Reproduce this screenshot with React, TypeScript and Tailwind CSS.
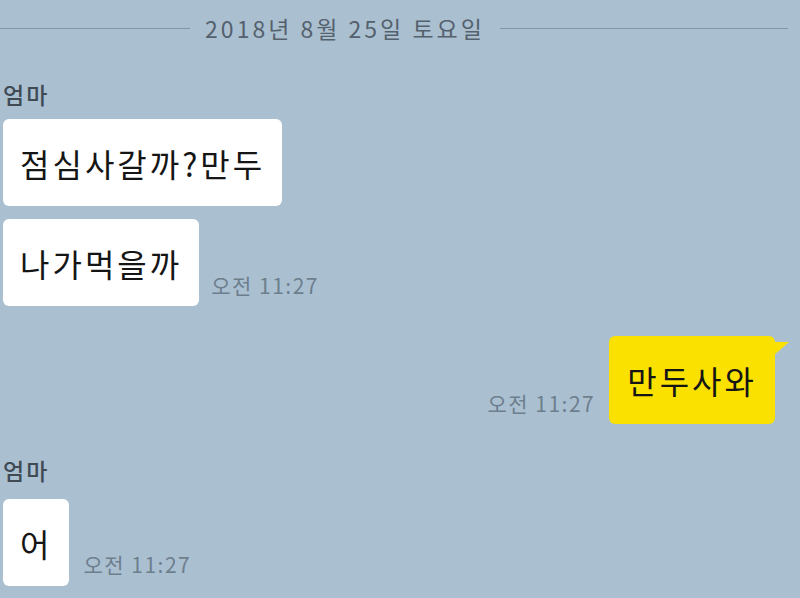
import React from 'react';

const font = { fontFamily: '"Noto Sans CJK KR", "Noto Sans", sans-serif' };

const Time: React.FC = () => (
  <span className="text-[21px] leading-none tracking-[1.5px] text-[#6d7e8d] whitespace-nowrap">오전 11:27</span>
);

const Bubble: React.FC<{ text: string }> = ({ text }) => (
  <div className="bg-white rounded-[6px] h-[87px] px-[17px] flex items-center">
    <span className="text-[32px] leading-none tracking-[3px] text-[#151515] whitespace-nowrap">{text}</span>
  </div>
);

export default function App() {
  return (
    <div className="w-[800px] h-[598px] bg-[#aac0d1] overflow-hidden flex flex-col" style={font}>
      {/* date divider */}
      <div className="h-[56px] flex items-center pr-[12px]">
        <div className="w-[190px] h-px bg-[#8497a7]" />
        <span className="mx-auto text-[23px] leading-none tracking-[3px] text-[#55616d] whitespace-nowrap">2018년 8월 25일 토요일</span>
        <div className="w-[288px] h-px bg-[#8497a7]" />
      </div>

      {/* mom block 1 */}
      <div className="pl-[3px] mt-[27px] text-[23px] leading-none tracking-[2px] font-medium text-[#3f4a55]">엄마</div>
      <div className="pl-[3px] mt-[13px] flex">
        <Bubble text="점심사갈까?만두" />
      </div>
      <div className="pl-[3px] mt-[13px] flex items-end gap-[12px]">
        <Bubble text="나가먹을까" />
        <div className="pb-[7px]">
          <Time />
        </div>
      </div>

      {/* me */}
      <div className="mt-[30px] pr-[25px] flex justify-end items-end gap-[14px]">
        <div className="pb-[7px]">
          <Time />
        </div>
        <div className="relative">
          <div className="bg-[#fae100] rounded-[6px] h-[88px] px-[18px] flex items-center">
            <span className="text-[32px] leading-none tracking-[3px] text-[#151515] whitespace-nowrap">만두사와</span>
          </div>
          <svg className="absolute right-[-14px] top-[6px]" width="16" height="16" viewBox="0 0 16 16">
            <path d="M0 0 L16 0 L0 14 Z" fill="#fae100" />
          </svg>
        </div>
      </div>

      {/* mom block 2 */}
      <div className="pl-[3px] mt-[35px] text-[23px] leading-none tracking-[2px] font-medium text-[#3f4a55]">엄마</div>
      <div className="pl-[3px] mt-[17px] flex items-end gap-[14px]">
        <Bubble text="어" />
        <div className="pb-[8px]">
          <Time />
        </div>
      </div>
    </div>
  );
}
